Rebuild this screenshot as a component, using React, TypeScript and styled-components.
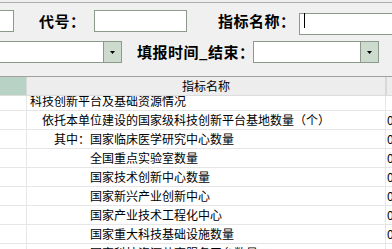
import React from "react";
import styled, { createGlobalStyle } from "styled-components";

const Global = createGlobalStyle`
  html, body { margin: 0; padding: 0; }
  body {
    width: 392px;
    height: 249px;
    overflow: hidden;
    background: #f0f0f0;
    font-family: "Noto Sans CJK SC", "Noto Sans", sans-serif;
    color: #000;
  }
`;

const Page = styled.div`
  width: 392px;
  height: 249px;
  overflow: hidden;
  display: flex;
  flex-direction: column;
  background: #f0f0f0;
`;

const Form = styled.div`
  margin-top: 2px;
  border-top: 1px solid #a9b0a9;
  padding: 7px 0 13px 0;
  display: flex;
  flex-direction: column;
  gap: 9px;
`;

const FormRow = styled.div<{ $cols: string }>`
  display: grid;
  grid-template-columns: ${(p) => p.$cols};
  align-items: center;
  height: 22px;
`;

const Label = styled.div<{ $pad: number }>`
  padding-left: ${(p) => p.$pad}px;
  font-size: 15px;
  font-weight: 700;
  line-height: 22px;
  white-space: nowrap;
  letter-spacing: 0.5px;
`;

const TextInput = styled.input<{ $clipLeft?: boolean; $clipRight?: boolean }>`
  box-sizing: border-box;
  height: 22px;
  width: 100%;
  margin: 0;
  padding: 0 3px;
  background: #fff;
  border: 1px solid #8c9a8c;
  ${(p) => (p.$clipLeft ? "border-left: none;" : "")}
  ${(p) => (p.$clipRight ? "border-right: none;" : "")}
  outline: none;
  font-family: inherit;
  font-size: 12px;
`;

const FieldWrap = styled.div`
  position: relative;
  height: 22px;
`;

const Caret = styled.span`
  position: absolute;
  left: 5px;
  top: 3px;
  width: 1px;
  height: 15px;
  background: #000;
`;

const Select = styled.div<{ $clipLeft?: boolean }>`
  box-sizing: border-box;
  height: 22px;
  background: #fff;
  border: 1px solid #8c9a8c;
  ${(p) => (p.$clipLeft ? "border-left: none;" : "")}
  display: flex;
  justify-content: flex-end;
`;

const DropButton = styled.div`
  width: 17px;
  height: 100%;
  border-left: 1px solid #8c9a8c;
  background: #cddbcf;
  display: flex;
  align-items: center;
  justify-content: center;
`;

const Arrow = () => (
  <svg width="5" height="3" viewBox="0 0 5 3">
    <polygon points="0,0 5,0 2.5,3" fill="#000" />
  </svg>
);

const Grid = styled.div`
  flex: 1;
  border-top: 1px solid #a0a0a0;
  background: #fff;
  display: flex;
  flex-direction: column;
  overflow: hidden;
  font-size: 12px;
`;

const HeaderRow = styled.div`
  display: grid;
  grid-template-columns: 26px 360px 1fr;
  height: 18px;
  border-bottom: 1px solid #dcdcdc;
  background: #ededed;
`;

const Corner = styled.div`
  background: #b8d3c5;
`;

const HeaderCell = styled.div<{ $last?: boolean }>`
  border-left: 1px solid #d8d8d8;
  ${(p) => (p.$last ? "" : "border-right: 1px solid #d8d8d8;")}
  text-align: center;
  line-height: 18px;
  white-space: nowrap;
`;

const Body = styled.div`
  flex: 1;
  overflow: hidden;
`;

const Rows = styled.div`
  margin-top: -4px;
`;

const Row = styled.div`
  display: grid;
  grid-template-columns: 26px 360px 1fr;
  height: 18px;
  border-bottom: 1px solid #e6e6e6;
`;

const RowHead = styled.div``;

const NameCell = styled.div<{ $indent: number }>`
  border-left: 1px solid #e6e6e6;
  border-right: 1px solid #e6e6e6;
  padding-left: ${(p) => 3 + p.$indent * 12}px;
  line-height: 18px;
  white-space: nowrap;
  overflow: hidden;
`;

const ValueCell = styled.div`
  padding-left: 1px;
  line-height: 18px;
  white-space: nowrap;
`;

const rows: { name: string; indent: number; value: string }[] = [
  { name: "科技创新平台及基础资源情况", indent: 0, value: "" },
  { name: "依托本单位建设的国家级科技创新平台基地数量（个）", indent: 1, value: "0" },
  { name: "其中：国家临床医学研究中心数量", indent: 2, value: "0" },
  { name: "全国重点实验室数量", indent: 5, value: "0" },
  { name: "国家技术创新中心数量", indent: 5, value: "0" },
  { name: "国家新兴产业创新中心", indent: 5, value: "0" },
  { name: "国家产业技术工程化中心", indent: 5, value: "0" },
  { name: "国家重大科技基础设施数量", indent: 5, value: "0" },
  { name: "国家科技资源共享服务平台数量", indent: 5, value: "0" },
];

export default function App() {
  return (
    <Page>
      <Global />
      <Form>
        <FormRow $cols="14px 80px 93px 112px 1fr">
          <TextInput $clipLeft />
          <Label $pad={25}>代号：</Label>
          <TextInput />
          <Label $pad={31}>指标名称：</Label>
          <FieldWrap>
            <TextInput $clipRight />
            <Caret />
          </FieldWrap>
        </FormRow>
        <FormRow $cols="122px 131px 126px 1fr">
          <Select $clipLeft>
            <DropButton>
              <Arrow />
            </DropButton>
          </Select>
          <Label $pad={15}>填报时间_结束：</Label>
          <Select>
            <DropButton>
              <Arrow />
            </DropButton>
          </Select>
        </FormRow>
      </Form>
      <Grid>
        <HeaderRow>
          <Corner />
          <HeaderCell>指标名称</HeaderCell>
          <HeaderCell $last />
        </HeaderRow>
        <Body>
          <Rows>
            {rows.map((r, i) => (
              <Row key={i}>
                <RowHead />
                <NameCell $indent={r.indent}>{r.name}</NameCell>
                <ValueCell>{r.value}</ValueCell>
              </Row>
            ))}
          </Rows>
        </Body>
      </Grid>
    </Page>
  );
}
